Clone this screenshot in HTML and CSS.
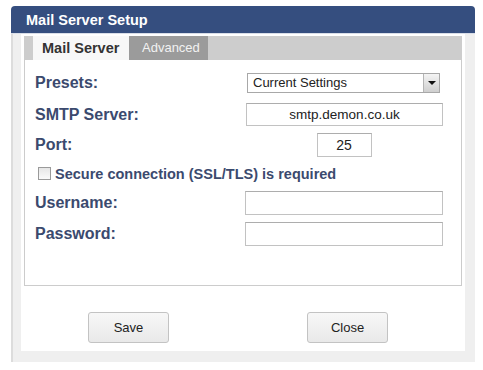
FILE: index.html
```html
<!DOCTYPE html>
<html>
<head>
<meta charset="utf-8">
<link rel="stylesheet" href="styles.css">
</head>
<body>
<div class="dialog">
  <div class="titlebar">Mail Server Setup</div>
  <div class="frame">
    <div class="inner">
      <div class="tabs">
        <div class="tab active">Mail Server</div>
        <div class="tab">Advanced</div>
      </div>
      <div class="panel">
        <div class="form">
          <label class="lbl">Presets:</label>
          <div class="select"><span class="sel-text">Current Settings</span><span class="arrow"></span></div>

          <label class="lbl">SMTP Server:</label>
          <input class="inp smtp" type="text" value="smtp.demon.co.uk">

          <label class="lbl">Port:</label>
          <input class="inp port" type="text" value="25">

          <div class="check-row"><span class="checkbox"></span><span class="check-text">Secure connection (SSL/TLS) is required</span></div>

          <label class="lbl">Username:</label>
          <input class="inp wide" type="text" value="">

          <label class="lbl">Password:</label>
          <input class="inp wide" type="password" value="">
        </div>
      </div>
      <div class="buttons">
        <button class="btn">Save</button>
        <button class="btn">Close</button>
      </div>
    </div>
  </div>
</div>
</body>
</html>
```

FILE: styles.css
```css
* { box-sizing: border-box; }
html, body { margin: 0; padding: 0; background: #ffffff; }
body { font-family: "Liberation Sans", Arial, sans-serif; }

.dialog {
  margin: 6px 0 0 11px;
  width: 464px;
}

.titlebar {
  height: 28px;
  background: #354e7f;
  border-radius: 4px 4px 0 0;
  border-bottom: 1px solid #d9dee8;
  color: #ffffff;
  font-weight: bold;
  font-size: 14.5px;
  line-height: 25px;
  padding: 2px 0 0 15px;
}

.frame {
  background: #efefef;
  border-left: 2px solid #dcdcdc;
  padding: 0 10px 11px 8px;
}

.inner {
  background: #ffffff;
  padding: 2px 3px 0 3px;
}

.tabs {
  display: flex;
  height: 24px;
  background: #cdcdcd;
  padding-left: 9px;
}

.tab {
  font-size: 13px;
  line-height: 24px;
  padding: 0 8px 0 13px;
  background: #9b9b9b;
  color: #f2f2f2;
}

.tab.active {
  background: #f8f8f8;
  color: #333333;
  font-weight: bold;
  font-size: 14.5px;
  width: 96px;
  padding: 0 0 0 9px;
}

.panel {
  height: 226px;
  border: 1px solid #cccccc;
  border-top: none;
  padding: 7px 0 0 10px;
}

.form {
  display: grid;
  grid-template-columns: 210px 198px;
  grid-template-rows: 32px 31px 29px 29px 30px 31px;
  align-items: center;
}

.lbl {
  font-size: 16px;
  font-weight: bold;
  color: #3b4a6e;
}

.select {
  position: relative;
  width: 193px;
  height: 20px;
  margin-left: 2px;
  border: 1px solid #a8a8a8;
  background: #ffffff;
  font-size: 13px;
  line-height: 18px;
  color: #222;
  padding-left: 5px;
}

.arrow {
  position: absolute;
  right: 0;
  top: 0;
  width: 16px;
  height: 18px;
  background: linear-gradient(#f4f4f4, #cfcfcf);
  border-left: 1px solid #b5b5b5;
}
.arrow::after {
  content: "";
  position: absolute;
  left: 4px;
  top: 7px;
  border-left: 4px solid transparent;
  border-right: 4px solid transparent;
  border-top: 4px solid #111;
}

.inp {
  font-family: "Liberation Sans", Arial, sans-serif;
  height: 24px;
  border: 1px solid #c2c2c2;
  border-top-color: #adadad;
  background: #ffffff;
  color: #222;
  text-align: center;
  padding: 0;
  margin: 0;
  outline: none;
}

.smtp {
  width: 197px;
  height: 23px;
  margin-left: 1px;
  font-size: 13.5px;
}

.port {
  width: 55px;
  font-size: 14px;
  justify-self: center;
}

.wide { width: 198px; }

.check-row {
  grid-column: 1 / 3;
  display: flex;
  align-items: center;
  padding-left: 3px;
}

.checkbox {
  width: 13px;
  height: 13px;
  border: 1px solid #9a9a9a;
  background: linear-gradient(#e6e6e6, #fafafa);
  margin-right: 4px;
}

.check-text {
  font-size: 14.5px;
  font-weight: bold;
  color: #3b4a6e;
}

.buttons {
  display: flex;
  gap: 138px;
  padding: 26px 0 8px 64px;
}

.btn {
  width: 81px;
  height: 31px;
  font-family: "Liberation Sans", Arial, sans-serif;
  font-size: 13px;
  color: #222;
  background: linear-gradient(#f7f7f7, #e9e9e9);
  border: 1px solid #c3c3c3;
  border-radius: 3px;
  padding: 0;
}
```
